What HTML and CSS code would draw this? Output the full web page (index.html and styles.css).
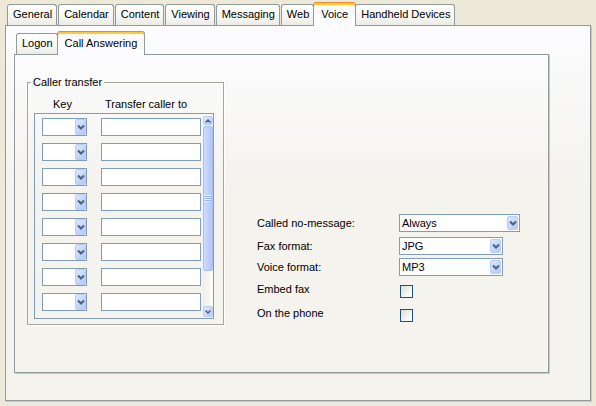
FILE: index.html
```html
<!DOCTYPE html>
<html lang="en">
<head>
  <meta charset="UTF-8">
  <title>Voice - Call Answering</title>
  <link rel="stylesheet" href="styles.css">
</head>
<body>
  <div class="tabs">
    <div class="tab">General</div>
    <div class="tab">Calendar</div>
    <div class="tab">Content</div>
    <div class="tab">Viewing</div>
    <div class="tab">Messaging</div>
    <div class="tab">Web</div>
    <div class="tab selected">Voice</div>
    <div class="tab">Handheld Devices</div>
  </div>

  <div class="page">
    <div class="tabs inner-tabs">
      <div class="tab">Logon</div>
      <div class="tab selected">Call Answering</div>
    </div>

    <div class="page inner-page">
      <fieldset class="transfer">
        <legend>Caller transfer</legend>
        <div class="cols">
          <span class="col-key">Key</span>
          <span>Transfer caller to</span>
        </div>
        <div class="listbox">
          <div class="rows">
            <div class="row">
              <div class="combo"><span class="drop"><svg width="8" height="6" viewBox="0 0 8 6"><polyline points="1,1.5 4,4.5 7,1.5" /></svg></span></div>
              <div class="field"></div>
            </div>
            <div class="row">
              <div class="combo"><span class="drop"><svg width="8" height="6" viewBox="0 0 8 6"><polyline points="1,1.5 4,4.5 7,1.5" /></svg></span></div>
              <div class="field"></div>
            </div>
            <div class="row">
              <div class="combo"><span class="drop"><svg width="8" height="6" viewBox="0 0 8 6"><polyline points="1,1.5 4,4.5 7,1.5" /></svg></span></div>
              <div class="field"></div>
            </div>
            <div class="row">
              <div class="combo"><span class="drop"><svg width="8" height="6" viewBox="0 0 8 6"><polyline points="1,1.5 4,4.5 7,1.5" /></svg></span></div>
              <div class="field"></div>
            </div>
            <div class="row">
              <div class="combo"><span class="drop"><svg width="8" height="6" viewBox="0 0 8 6"><polyline points="1,1.5 4,4.5 7,1.5" /></svg></span></div>
              <div class="field"></div>
            </div>
            <div class="row">
              <div class="combo"><span class="drop"><svg width="8" height="6" viewBox="0 0 8 6"><polyline points="1,1.5 4,4.5 7,1.5" /></svg></span></div>
              <div class="field"></div>
            </div>
            <div class="row">
              <div class="combo"><span class="drop"><svg width="8" height="6" viewBox="0 0 8 6"><polyline points="1,1.5 4,4.5 7,1.5" /></svg></span></div>
              <div class="field"></div>
            </div>
            <div class="row">
              <div class="combo"><span class="drop"><svg width="8" height="6" viewBox="0 0 8 6"><polyline points="1,1.5 4,4.5 7,1.5" /></svg></span></div>
              <div class="field"></div>
            </div>
          </div>

          <div class="scrollbar">
            <div class="sb-btn"><svg width="6" height="4" viewBox="0 0 6 4"><polyline points="0.5,3.5 3,1 5.5,3.5" /></svg></div>
            <div class="sb-thumb"></div>
            <div class="sb-track"></div>
            <div class="sb-btn sb-down"><svg width="6" height="4" viewBox="0 0 6 4"><polyline points="0.5,0.5 3,3 5.5,0.5" /></svg></div>
          </div>
        </div>
      </fieldset>

      <div class="options">
        <label>Called no-message:</label>
        <div class="select">Always<span class="drop"><svg width="8" height="6" viewBox="0 0 8 6"><polyline points="1,1.5 4,4.5 7,1.5" /></svg></span></div>

        <label>Fax format:</label>
        <div class="select narrow">JPG<span class="drop"><svg width="8" height="6" viewBox="0 0 8 6"><polyline points="1,1.5 4,4.5 7,1.5" /></svg></span></div>

        <label>Voice format:</label>
        <div class="select narrow">MP3<span class="drop"><svg width="8" height="6" viewBox="0 0 8 6"><polyline points="1,1.5 4,4.5 7,1.5" /></svg></span></div>

        <label class="check-label">Embed fax</label>
        <div class="checkbox"></div>

        <label class="check-label">On the phone</label>
        <div class="checkbox"></div>
      </div>
    </div>
  </div>
</body>
</html>
```

FILE: styles.css
```css
* {
  box-sizing: border-box;
}

body {
  margin: 0;
  padding: 0 5px 5px 5px;
  background: #ECE9D8;
  font: 11px/13px "Liberation Sans", Arial, sans-serif;
  color: #000;
}

/* tab strip */
.tabs {
  display: flex;
  align-items: flex-end;
  height: 25px;
  padding: 2px 0 0 2px;
}

.tab {
  height: 21px;
  padding: 0 4px 0 5px;
  margin-right: 1px;
  border: 1px solid #919B9C;
  border-bottom: 0;
  border-radius: 3px 3px 0 0;
  background: linear-gradient(#FFFFFF, #F5F5F1 65%, #ECEBE6);
  line-height: 19px;
  white-space: nowrap;
}

.tab.selected {
  position: relative;
  z-index: 1;
  height: 24px;
  margin: 0 -1px -1px -2px;
  padding: 2px 7px 0 7px;
  border-top-color: #E68B2C;
  background: #FCFCFE;
  box-shadow: inset 0 2px 0 #FFC73C;
}

.inner-tabs {
  padding-left: 10px;
}

/* tab pages */
.page {
  height: 376px;
  padding: 3px 0 0 0;
  border: 1px solid #919B9C;
  background: linear-gradient(#FCFCFE 0, #F4F3EE 160px);
  box-shadow: 1px 1px 0 #CBC9BA;
}

.inner-page {
  display: flex;
  align-items: flex-start;
  width: 535px;
  height: 319px;
  margin-left: 8px;
  padding: 0;
  background: linear-gradient(#FCFCFE 0, #F4F3EE 130px);
}

/* caller transfer group */
.transfer {
  width: 197px;
  margin: 21px 0 0 12px;
  padding: 9px 9px 5px 6px;
  min-width: 0;
  border: 1px solid #A7A699;
  box-shadow: 1px 1px 0 #FFFFFF;
}

.transfer legend {
  margin-left: -3px;
  padding: 0 2px;
  line-height: 13px;
}

.cols {
  display: flex;
  height: 13px;
  padding-left: 19px;
  margin-bottom: 2px;
}

.col-key {
  width: 52px;
}

.listbox {
  display: flex;
  width: 180px;
  height: 206px;
  border: 1px solid #7F9DB9;
  overflow: hidden;
}

.rows {
  display: flex;
  flex-direction: column;
  gap: 7px;
  padding: 4px 0 0 7px;
}

.row {
  display: flex;
  gap: 14px;
}

.combo,
.field,
.select {
  height: 18px;
  border: 1px solid #7F9DB9;
  background: #FFFFFF;
}

.combo {
  display: flex;
  justify-content: flex-end;
  width: 45px;
}

.field {
  width: 100px;
}

.drop {
  display: flex;
  align-items: center;
  justify-content: center;
  width: 11px;
  border: 1px solid #B9CBF6;
  border-radius: 2px;
  background: linear-gradient(135deg, #DCE6FE, #B5C9F8);
}

.drop svg polyline,
.sb-btn svg polyline {
  fill: none;
  stroke: #4D6185;
  stroke-width: 2;
}

/* scrollbar */
.scrollbar {
  display: flex;
  flex-direction: column;
  width: 10px;
  margin-left: 2px;
  padding: 2px 0 1px 0;
}

.sb-btn {
  display: flex;
  align-items: center;
  justify-content: center;
  height: 9px;
  border: 1px solid #B9CBF6;
  border-radius: 2px;
  background: linear-gradient(135deg, #E2EAFE, #B8CCF9);
}

.sb-btn svg polyline {
  stroke-width: 1.5;
}

.sb-down {
  height: 11px;
}

.sb-thumb {
  position: relative;
  height: 145px;
  margin-top: 1px;
  border: 1px solid #A9BFF4;
  border-radius: 2px;
  background: linear-gradient(to right, #CFDDFE, #BDD0FC 55%, #AFC6F8);
}

.sb-thumb::after {
  content: "";
  position: absolute;
  left: 1px;
  right: 1px;
  top: 68px;
  height: 7px;
  background: repeating-linear-gradient(#EEF3FE 0 1px, #8FB0F4 1px 2px);
}

.sb-track {
  flex: 1;
  background: linear-gradient(to right, #EFEEE7, #FDFDFA);
}

/* right-hand options */
.options {
  display: grid;
  grid-template-columns: 142px auto;
  grid-template-rows: 23px 21px 27px 24px 13px;
  align-items: start;
  margin: 159px 0 0 33px;
}

.options label {
  line-height: 18px;
  white-space: nowrap;
}

.options .check-label {
  line-height: 13px;
  margin-top: -2px;
}

.select {
  display: flex;
  align-items: center;
  width: 121px;
  padding: 0 1px 0 2px;
  line-height: 16px;
}

.select.narrow {
  width: 104px;
}

.select .drop {
  height: 14px;
  margin-left: auto;
}

.combo .drop {
  height: 16px;
  margin: 0;
}

.checkbox {
  width: 13px;
  height: 13px;
  margin-left: 1px;
  border: 1px solid #1C5180;
  background: linear-gradient(135deg, #DCDCD7, #F4F4F0 60%, #FFFFFF);
}
```
